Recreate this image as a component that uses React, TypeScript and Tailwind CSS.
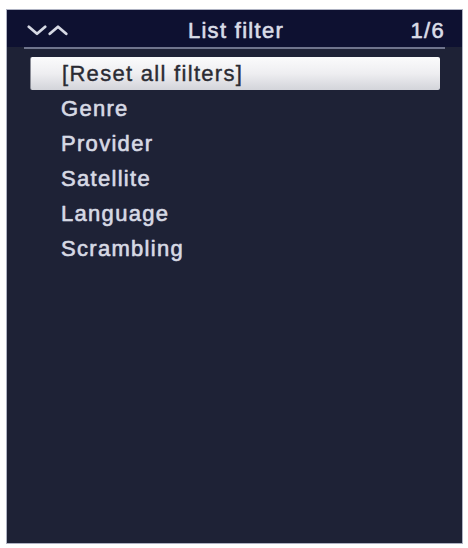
import React from "react";

const items = ["Genre", "Provider", "Satellite", "Language", "Scrambling"];

export default function App() {
  return (
    <div
      className="w-[468px] h-[548px] bg-white pt-[9px] pl-[6px]"
      style={{ fontFamily: '"Liberation Sans", Arial, sans-serif' }}
    >
      <div className="w-[457px] h-[535px] bg-[#1e2236] border border-[#aeb2c2] flex flex-col">
        <div className="h-[37px] bg-[#0e1131] flex items-center pt-[3px] pl-[20px] pr-[17px] text-[22px] tracking-[1.3px] text-[#d9dce6] [-webkit-text-stroke:0.45px_#d9dce6] [text-shadow:0_0_1px_rgba(217,220,230,0.6)]">
          <div className="w-[90px] flex items-center">
            <svg width="42" height="11" viewBox="0 0 42 11" fill="none">
              <path d="M1.8 1.8 L10 8.8 L18.2 1.8" stroke="#d6d9e4" strokeWidth="2.8" strokeLinecap="round" strokeLinejoin="round" />
              <path d="M22.8 8.8 L31 1.8 L39.2 8.8" stroke="#d6d9e4" strokeWidth="2.8" strokeLinecap="round" strokeLinejoin="round" />
            </svg>
          </div>
          <div className="flex-1 text-center">List filter</div>
          <div className="w-[90px] text-right">1/6</div>
        </div>
        <div className="h-[1.5px] mx-[17px] bg-[#6f748c]" />
        <div className="flex flex-col mt-[7px] text-[22px] tracking-[1.3px]">
          <div className="h-[35px] flex items-center">
            <div className="ml-[23px] w-[410px] h-[33px] flex items-center pl-[31px] rounded-[2px] bg-gradient-to-b from-[#fbfbfc] via-[#eeeef1] to-[#d3d4da] border-l border-[#8a8c96] text-[#2a2b33] [-webkit-text-stroke:0.4px_#2a2b33]">
              [Reset all filters]
            </div>
          </div>
          {items.map((t) => (
            <div
              key={t}
              className="h-[35px] flex items-center pl-[54px] text-[#d6d9e4] [-webkit-text-stroke:0.45px_#d6d9e4] [text-shadow:0_0_1px_rgba(214,217,228,0.6)]"
            >
              {t}
            </div>
          ))}
        </div>
      </div>
    </div>
  );
}
